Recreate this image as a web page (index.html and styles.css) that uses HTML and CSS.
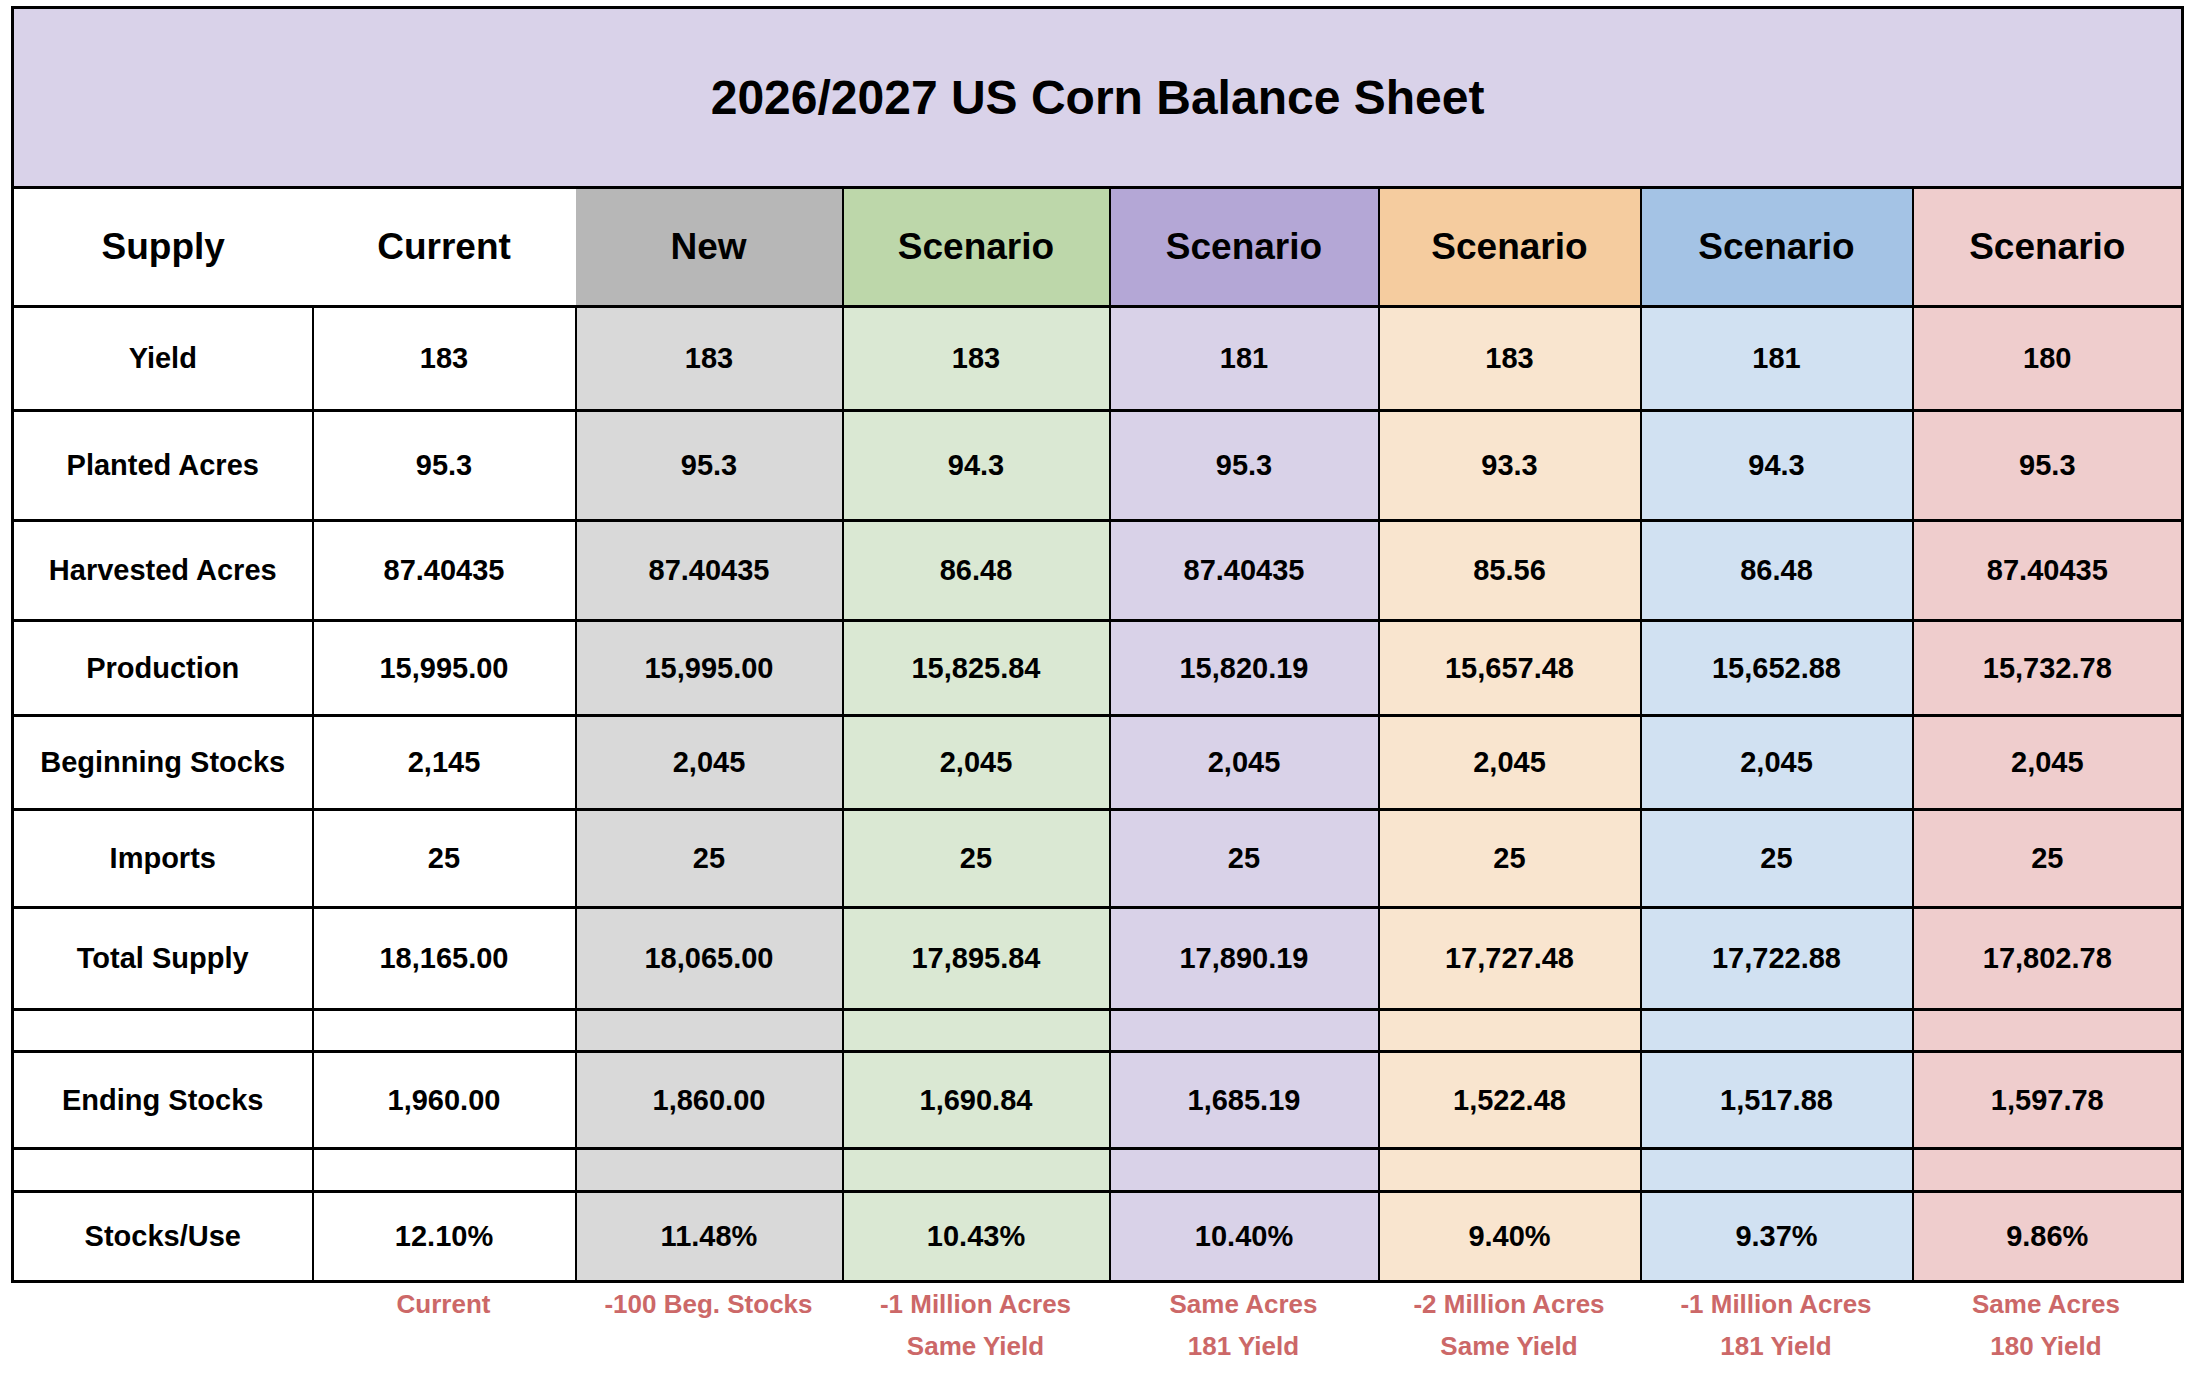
FILE: index.html
```html
<!DOCTYPE html>
<html lang="en">
<head>
<meta charset="utf-8">
<title>2026/2027 US Corn Balance Sheet</title>
<link rel="stylesheet" href="styles.css">
</head>
<body>
<div class="page">
  <table class="sheet">
    <colgroup>
      <col class="c-label">
      <col class="c-current">
      <col class="c-new">
      <col class="c-green">
      <col class="c-purple">
      <col class="c-orange">
      <col class="c-blue">
      <col class="c-red">
    </colgroup>
    <thead>
      <tr class="r-title"><th colspan="8" class="title">2026/2027 US Corn Balance Sheet</th></tr>
      <tr class="r-head">
        <th class="h-supply">Supply</th>
        <th class="h-current">Current</th>
        <th class="h-new">New</th>
        <th class="h-green">Scenario</th>
        <th class="h-purple">Scenario</th>
        <th class="h-orange">Scenario</th>
        <th class="h-blue">Scenario</th>
        <th class="h-red">Scenario</th>
      </tr>
    </thead>
    <tbody>
      <tr class="r-104">
        <td>Yield</td><td>183</td><td class="b-new">183</td><td class="b-green">183</td><td class="b-purple">181</td><td class="b-orange">183</td><td class="b-blue">181</td><td class="b-red">180</td>
      </tr>
      <tr class="r-110">
        <td>Planted Acres</td><td>95.3</td><td class="b-new">95.3</td><td class="b-green">94.3</td><td class="b-purple">95.3</td><td class="b-orange">93.3</td><td class="b-blue">94.3</td><td class="b-red">95.3</td>
      </tr>
      <tr class="r-100">
        <td>Harvested Acres</td><td>87.40435</td><td class="b-new">87.40435</td><td class="b-green">86.48</td><td class="b-purple">87.40435</td><td class="b-orange">85.56</td><td class="b-blue">86.48</td><td class="b-red">87.40435</td>
      </tr>
      <tr class="r-95">
        <td>Production</td><td>15,995.00</td><td class="b-new">15,995.00</td><td class="b-green">15,825.84</td><td class="b-purple">15,820.19</td><td class="b-orange">15,657.48</td><td class="b-blue">15,652.88</td><td class="b-red">15,732.78</td>
      </tr>
      <tr class="r-94">
        <td>Beginning Stocks</td><td>2,145</td><td class="b-new">2,045</td><td class="b-green">2,045</td><td class="b-purple">2,045</td><td class="b-orange">2,045</td><td class="b-blue">2,045</td><td class="b-red">2,045</td>
      </tr>
      <tr class="r-98">
        <td>Imports</td><td>25</td><td class="b-new">25</td><td class="b-green">25</td><td class="b-purple">25</td><td class="b-orange">25</td><td class="b-blue">25</td><td class="b-red">25</td>
      </tr>
      <tr class="r-102">
        <td>Total Supply</td><td>18,165.00</td><td class="b-new">18,065.00</td><td class="b-green">17,895.84</td><td class="b-purple">17,890.19</td><td class="b-orange">17,727.48</td><td class="b-blue">17,722.88</td><td class="b-red">17,802.78</td>
      </tr>
      <tr class="r-42">
        <td></td><td></td><td class="b-new"></td><td class="b-green"></td><td class="b-purple"></td><td class="b-orange"></td><td class="b-blue"></td><td class="b-red"></td>
      </tr>
      <tr class="r-97">
        <td>Ending Stocks</td><td>1,960.00</td><td class="b-new">1,860.00</td><td class="b-green">1,690.84</td><td class="b-purple">1,685.19</td><td class="b-orange">1,522.48</td><td class="b-blue">1,517.88</td><td class="b-red">1,597.78</td>
      </tr>
      <tr class="r-43">
        <td></td><td></td><td class="b-new"></td><td class="b-green"></td><td class="b-purple"></td><td class="b-orange"></td><td class="b-blue"></td><td class="b-red"></td>
      </tr>
      <tr class="r-90">
        <td>Stocks/Use</td><td>12.10%</td><td class="b-new">11.48%</td><td class="b-green">10.43%</td><td class="b-purple">10.40%</td><td class="b-orange">9.40%</td><td class="b-blue">9.37%</td><td class="b-red">9.86%</td>
      </tr>
    </tbody>
  </table>
  <div class="notes">
    <div class="note"></div>
    <div class="note">Current</div>
    <div class="note">-100 Beg. Stocks</div>
    <div class="note">-1 Million Acres<br>Same Yield</div>
    <div class="note">Same Acres<br>181 Yield</div>
    <div class="note">-2 Million Acres<br>Same Yield</div>
    <div class="note">-1 Million Acres<br>181 Yield</div>
    <div class="note">Same Acres<br>180 Yield</div>
  </div>
</div>
</body>
</html>
```

FILE: styles.css
```css
html, body {
  margin: 0;
  padding: 0;
  background: #ffffff;
}

body {
  font-family: "Liberation Sans", Arial, Helvetica, sans-serif;
  font-weight: 700;
  color: #000000;
}

.page {
  padding: 6px 0 0 11px;
}

.sheet {
  border-collapse: collapse;
  table-layout: fixed;
  width: 2170px;
  border: 3px solid #000;
}

.c-label { width: 300px; }
.c-current { width: 263px; }
.c-new { width: 267px; }
.c-green { width: 267px; }
.c-purple { width: 269px; }
.c-orange { width: 262px; }
.c-blue { width: 272px; }
.c-red { width: 270px; }

.sheet th,
.sheet td {
  padding: 0;
  text-align: center;
  vertical-align: middle;
  font-weight: 700;
  white-space: nowrap;
  overflow: hidden;
}

.sheet td {
  font-size: 29px;
  border-top: 3px solid #000;
  border-bottom: 3px solid #000;
  border-left: 2px solid #000;
  border-right: 2px solid #000;
}

.title {
  height: 177px;
  background: #d9d2e9;
  font-size: 48px;
  border-bottom: 3px solid #000;
}

.r-head th {
  height: 116px;
  font-size: 37px;
  border-top: 3px solid #000;
  border-bottom: 3px solid #000;
}

.h-supply, .h-current { background: #ffffff; }
.h-supply { border-right: none; }
.h-current { border-left: none; border-right: none; }
.h-new { background: #b7b7b7; border-left: none; border-right: 2px solid #000; }
.h-green { background: #bdd7aa; border-left: 2px solid #000; border-right: 2px solid #000; }
.h-purple { background: #b4a7d6; border-left: 2px solid #000; border-right: 2px solid #000; }
.h-orange { background: #f5cc9f; border-left: 2px solid #000; border-right: 2px solid #000; }
.h-blue { background: #a4c3e5; border-left: 2px solid #000; border-right: 2px solid #000; }
.h-red { background: #efcdcd; border-left: 2px solid #000; }

.b-new { background: #d9d9d9; }
.b-green { background: #dae8d3; }
.b-purple { background: #d9d2e8; }
.b-orange { background: #f9e5cf; }
.b-blue { background: #d1e1f2; }
.b-red { background: #efcdcd; }

.r-104 td { height: 101px; }
.r-110 td { height: 107px; }
.r-100 td { height: 97px; }
.r-95 td { height: 92px; }
.r-94 td { height: 91px; }
.r-98 td { height: 95px; }
.r-102 td { height: 99px; }
.r-42 td { height: 39px; }
.r-97 td { height: 94px; }
.r-43 td { height: 40px; }
.r-90 td { height: 87px; }

.notes {
  display: grid;
  grid-template-columns: 301px 263px 267px 267px 269px 262px 272px 268px;
  padding-top: 0;
}

.note {
  text-align: center;
  font-size: 26px;
  line-height: 42px;
  color: #cc6868;
  white-space: nowrap;
}
```
